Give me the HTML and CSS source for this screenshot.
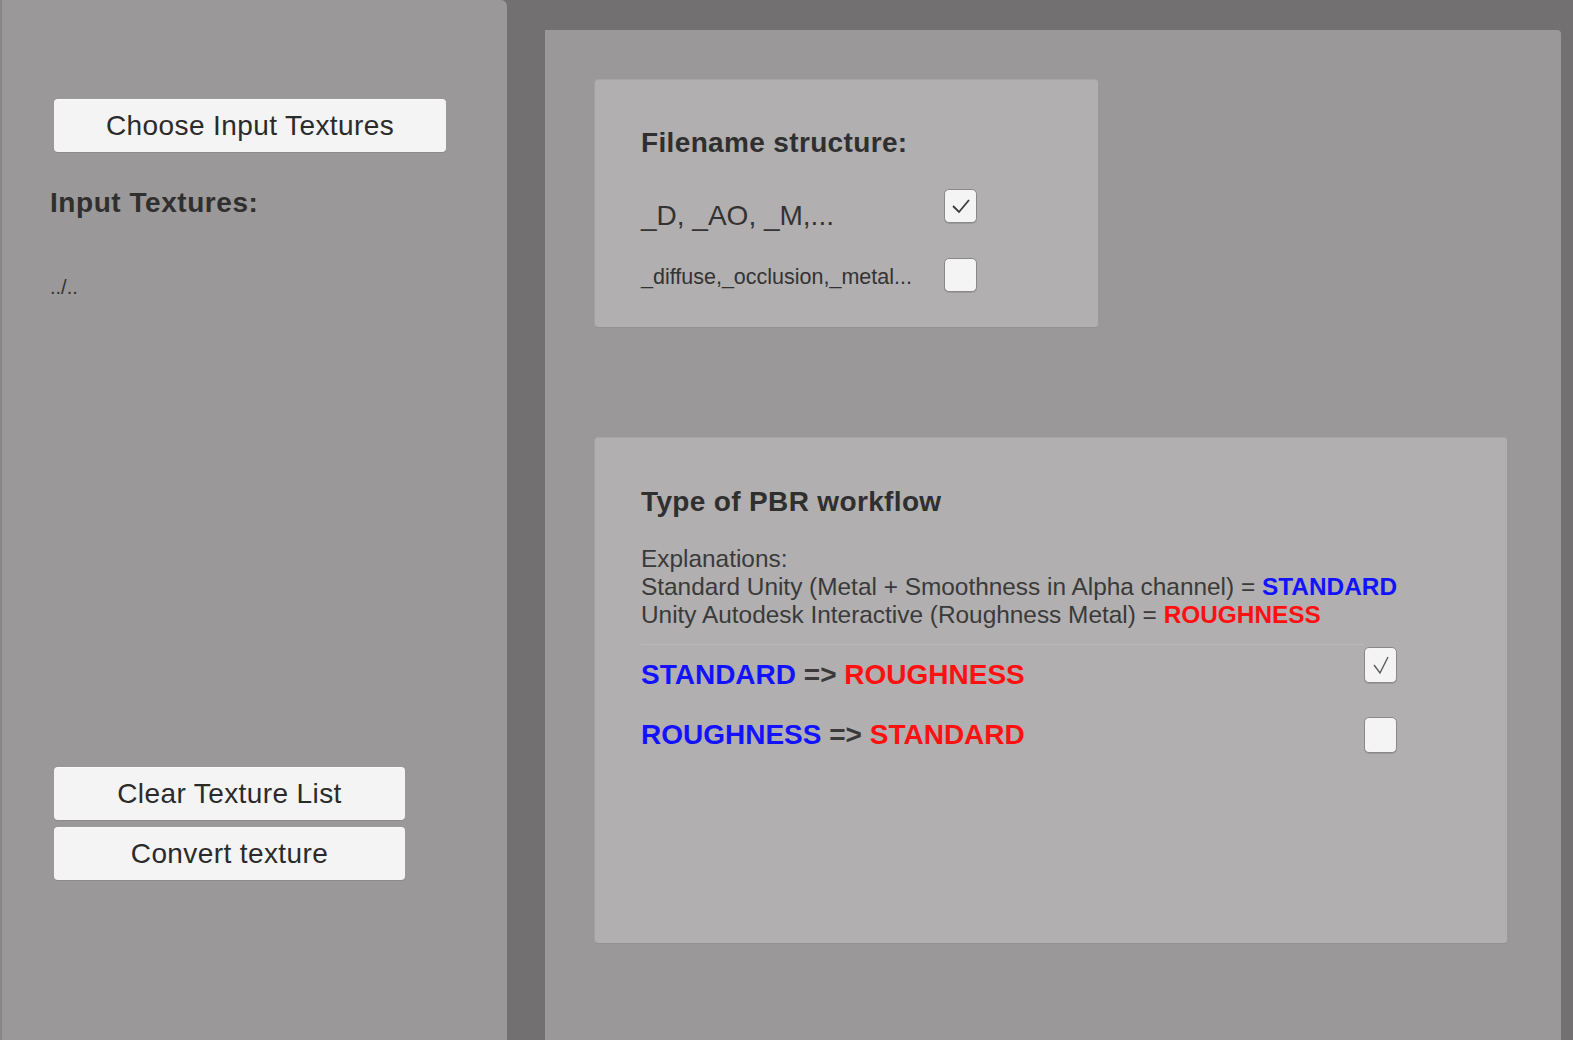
FILE: index.html
```html
<!DOCTYPE html>
<html>
<head>
<meta charset="utf-8">
<link rel="stylesheet" href="styles.css">
</head>
<body>
<div class="app">
  <aside class="side">
    <button class="btn btn-wide">Choose Input Textures</button>
    <div class="side-title">Input Textures:</div>
    <div class="path">../..</div>
    <button class="btn btn-narrow btn-clear">Clear Texture List</button>
    <button class="btn btn-narrow btn-convert">Convert texture</button>
  </aside>
  <main class="main">
    <section class="box box-file">
      <div class="box-title">Filename structure:</div>
      <div class="frow frow-1">
        <span class="flabel flabel-big">_D, _AO, _M,...</span>
        <span class="check check-file">
          <svg viewBox="0 0 33 34" width="33" height="34"><polyline points="9,17 15,23 25,11" fill="none" stroke="#3c3c3c" stroke-width="1.8"/></svg>
        </span>
      </div>
      <div class="frow frow-2">
        <span class="flabel flabel-small">_diffuse,_occlusion,_metal...</span>
        <span class="check check-file"></span>
      </div>
    </section>
    <section class="box box-pbr">
      <div class="box-title">Type of PBR workflow</div>
      <div class="explain">
        <div>Explanations:</div>
        <div>Standard Unity (Metal + Smoothness in Alpha channel) = <b class="blue">STANDARD</b></div>
        <div>Unity Autodesk Interactive (Roughness Metal) = <b class="red">ROUGHNESS</b></div>
      </div>
      <div class="sep"></div>
      <div class="prow prow-1">
        <span class="plabel"><span class="blue">STANDARD</span> =&gt; <span class="red">ROUGHNESS</span></span>
        <span class="check check-pbr">
          <svg viewBox="0 0 33 36" width="33" height="36"><polyline points="10,18 16,26 24,10" fill="none" stroke="#5a5a5a" stroke-width="1.4"/></svg>
        </span>
      </div>
      <div class="prow prow-2">
        <span class="plabel"><span class="blue">ROUGHNESS</span> =&gt; <span class="red">STANDARD</span></span>
        <span class="check check-pbr"></span>
      </div>
    </section>
  </main>
</div>
</body>
</html>
```

FILE: styles.css
```css
* { box-sizing: border-box; }
html, body {
  margin: 0;
  padding: 0;
  width: 1573px;
  height: 1040px;
  overflow: hidden;
  background: #727070;
  font-family: "Liberation Sans", Arial, sans-serif;
  color: #2e2e2e;
}
.app {
  display: flex;
  height: 1040px;
}
.side {
  width: 507px;
  height: 1040px;
  background: #9a9899;
  border-left: 2px solid #888687;
  padding: 100px 0 0 48px;
  display: flex;
  flex-direction: column;
  align-items: flex-start;
  border-top-right-radius: 6px;
}
.btn {
  font-family: "Liberation Sans", Arial, sans-serif;
  font-size: 28px;
  letter-spacing: 0.4px;
  color: #2b2b2b;
  background: #f4f4f4;
  border: none;
  border-radius: 4px;
  height: 52px;
  margin-left: 4px;
  padding: 0;
  box-shadow: 0 1px 0 #8c8a8b, 0 -1px 0 #fbfbfb;
  line-height: 52px;
  text-align: center;
}
.btn-wide { width: 392px; }
.btn-narrow { width: 351px; }
.btn-clear { margin-top: 469px; }
.btn-convert { margin-top: 8px; }
.side-title {
  font-weight: bold;
  font-size: 28px;
  letter-spacing: 0.55px;
  line-height: 32px;
  margin-top: 35px;
  color: #2f2f2f;
}
.path {
  font-size: 20px;
  line-height: 24px;
  margin-top: 56px;
  color: #333;
}
.main {
  margin-left: 38px;
  margin-top: 30px;
  width: 1016px;
  height: 1010px;
  background: #9a9899;
  border-top-right-radius: 4px;
  padding: 50px 0 0 50px;
}
.box {
  background: #b1afb0;
  border-radius: 3px;
  padding-left: 46px;
  box-shadow: 0 1px 0 #939192, -1px 0 0 #a2a0a1, 0 -1px 0 #a6a4a7;
}
.box-file {
  width: 503px;
  height: 247px;
  padding-top: 47px;
}
.box-title {
  font-weight: bold;
  font-size: 28px;
  letter-spacing: 0.35px;
  line-height: 32px;
  color: #2f2f2f;
}
.frow { display: flex; }
.frow-1 { align-items: flex-start; margin-top: 30px; }
.frow-2 { align-items: center; margin-top: 26px; }
.flabel { width: 303px; color: #333; }
.flabel-big { font-size: 28px; line-height: 32px; margin-top: 11px; }
.flabel-small { font-size: 21.5px; line-height: 26px; padding-top: 4px; }
.check {
  display: block;
  background: #f4f4f4;
  border: 1px solid #8a8889;
  border-radius: 5px;
  box-shadow: 0 1px 0 #9c9a9b;
}
.check svg { display: block; margin: -1px; }
.check-file { width: 33px; height: 34px; }
.check-pbr { width: 33px; height: 36px; }
.box-pbr {
  margin-top: 111px;
  width: 912px;
  height: 505px;
  padding-top: 48px;
}
.explain {
  margin-top: 27px;
  font-size: 24.4px;
  line-height: 28px;
  color: #3a3a3a;
}
.explain b { font-weight: bold; }
.blue { color: #1212ff; }
.red { color: #ff1010; }
.sep {
  margin-top: 15px;
  width: 723px;
  height: 1px;
  background: #bbb9ba;
}
.prow { display: flex; align-items: flex-start; }
.prow-1 { margin-top: 2px; }
.prow-2 { margin-top: 26px; }
.plabel {
  width: 723px;
  font-weight: bold;
  font-size: 28px;
  line-height: 32px;
  color: #3a3a3a;
}
.prow-1 .plabel { margin-top: 12px; }
.prow-2 .plabel { margin-top: 2px; }
```
